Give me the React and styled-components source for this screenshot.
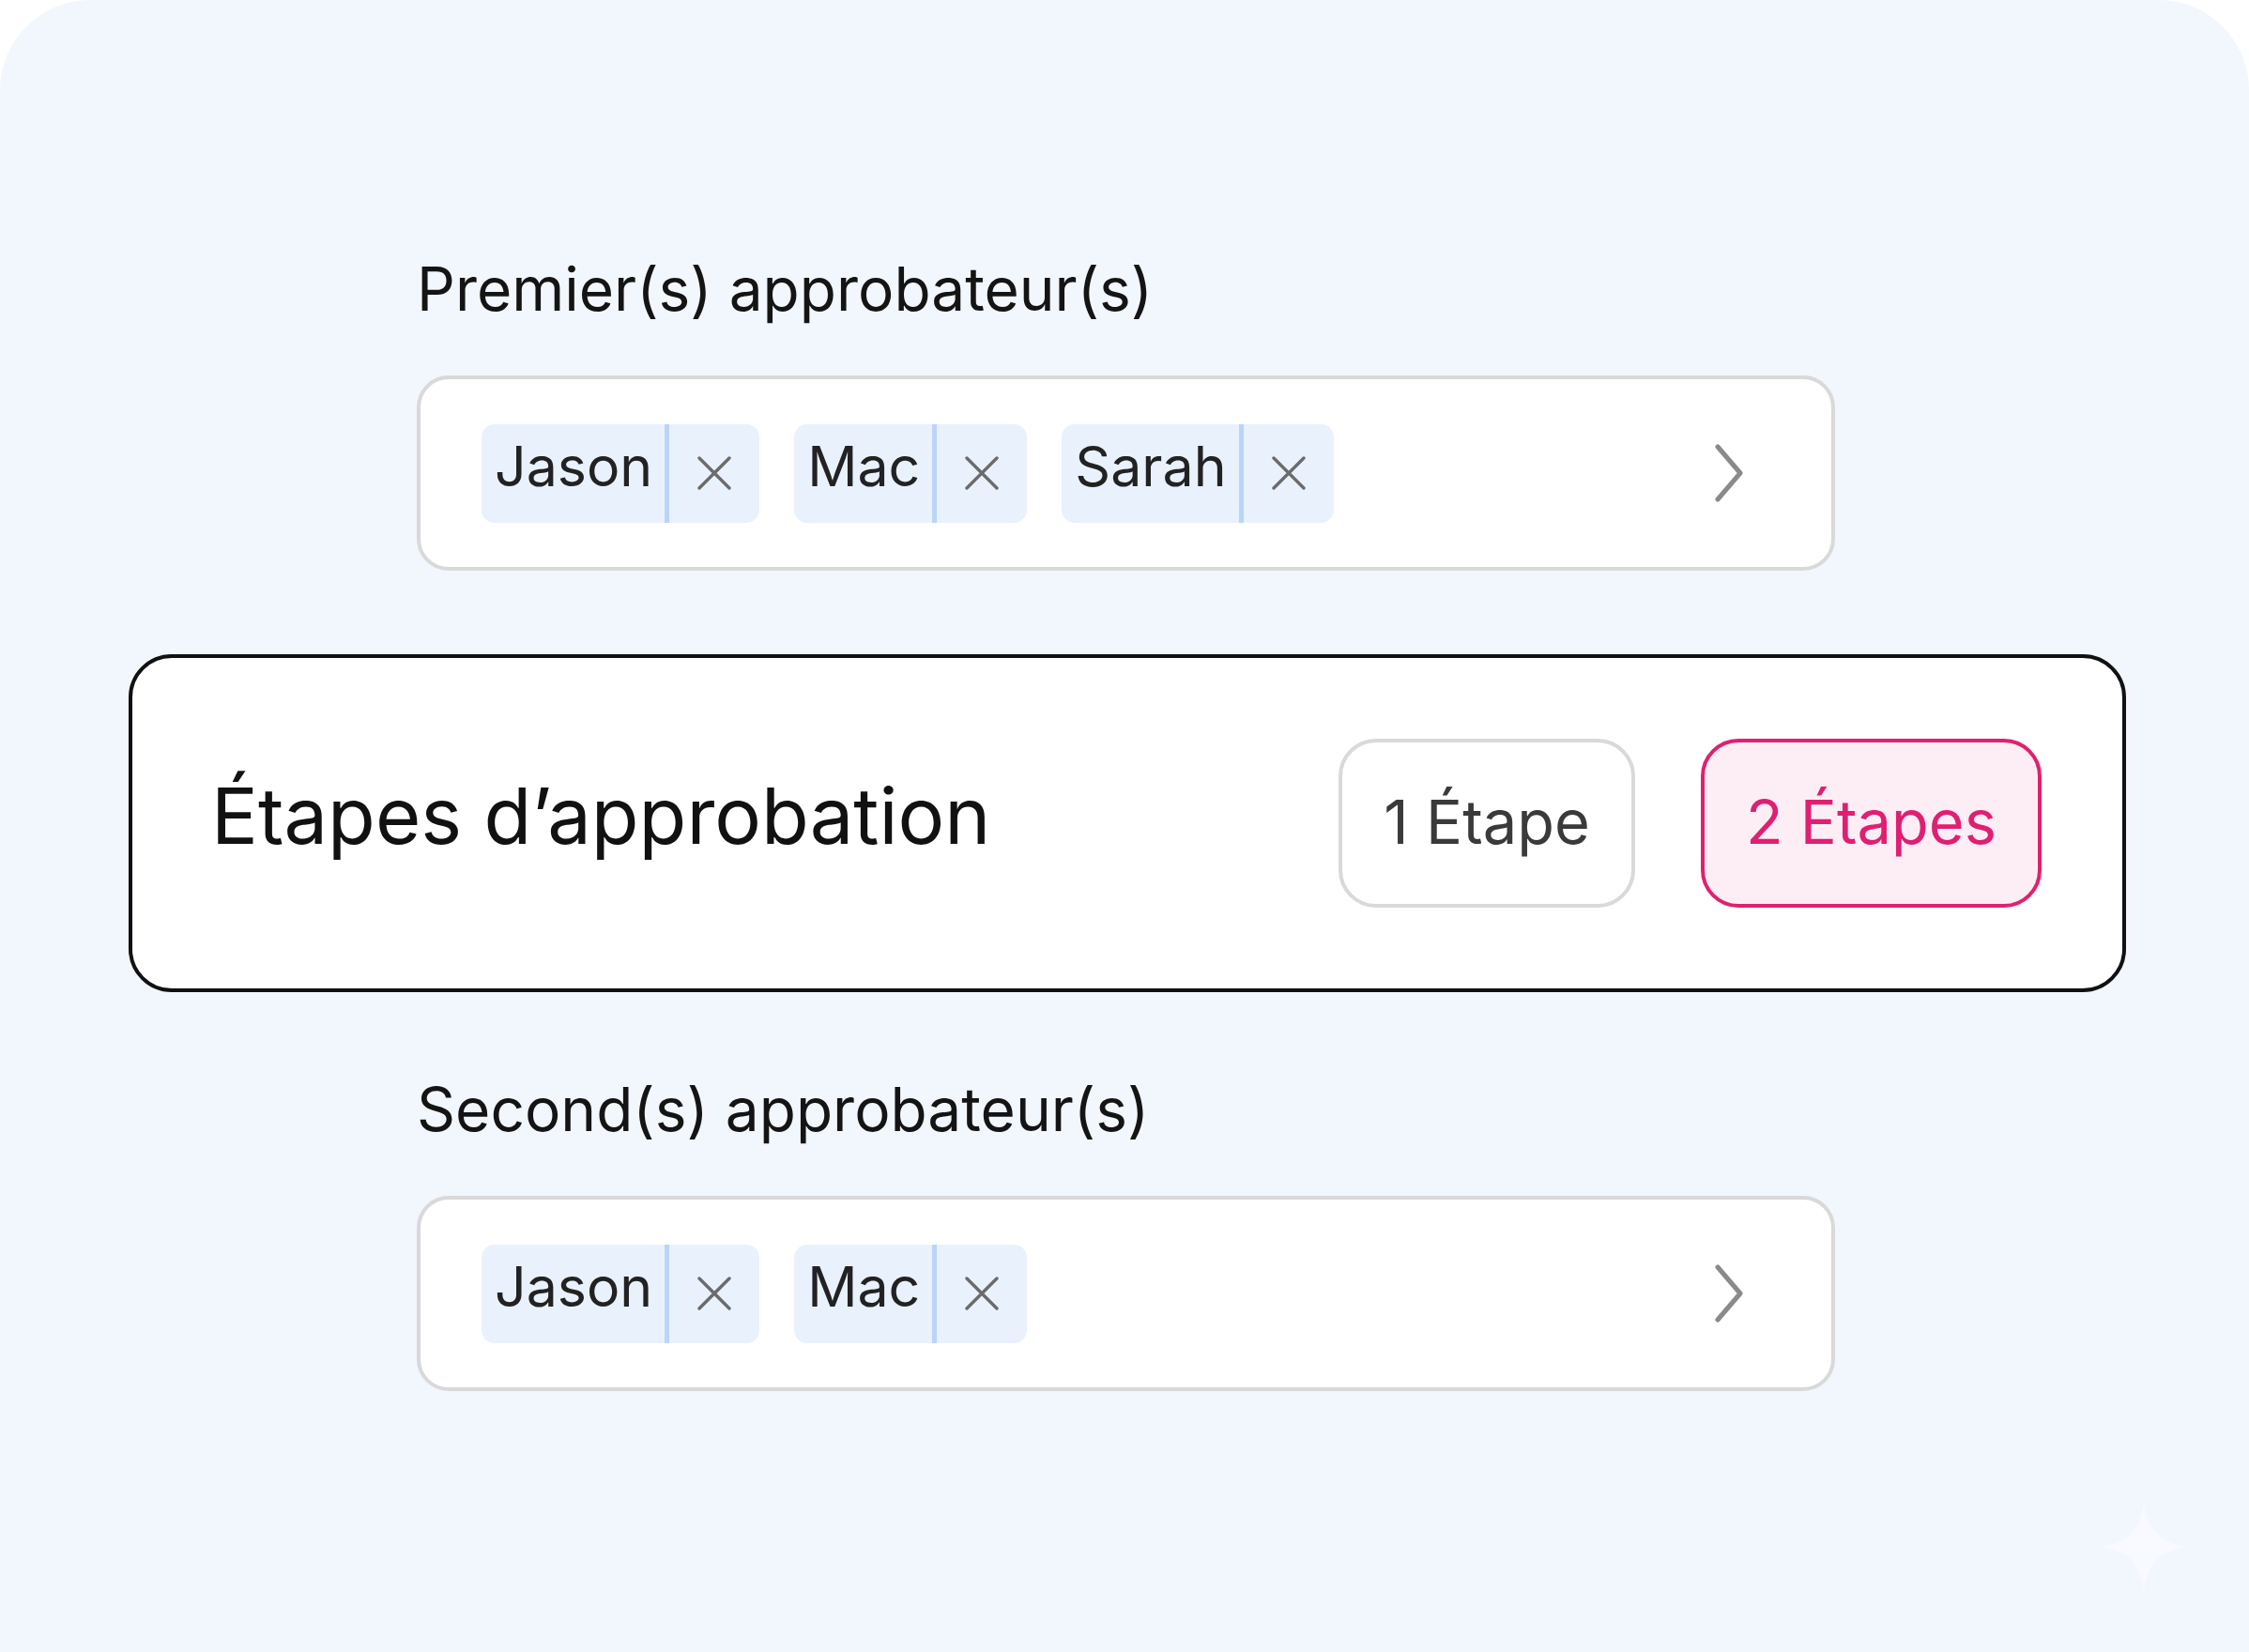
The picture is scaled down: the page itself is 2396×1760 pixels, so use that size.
import React from "react";
import styled, { createGlobalStyle } from "styled-components";

const GlobalStyle = createGlobalStyle`
  html, body {
    margin: 0;
    padding: 0;
    background: #ffffff;
  }
  body {
    font-family: Inter, Lato, "Liberation Sans", sans-serif;
    font-variant-ligatures: none;
  }
`;

const first = ["Jason", "Mac", "Sarah"];
const second = ["Jason", "Mac"];

const App = () => {
  return (
    <>
      <GlobalStyle />
      <Frame>
        <Section>
          <Label>Premier(s) approbateur(s)</Label>
          <Picker names={first} />
        </Section>
        <StepsCard>
          <StepsTitle>Étapes d’approbation</StepsTitle>
          <StepButtons>
            <StepButton>1 Étape</StepButton>
            <StepButton $active>2 Étapes</StepButton>
          </StepButtons>
        </StepsCard>
        <Section>
          <Label>Second(s) approbateur(s)</Label>
          <Picker names={second} />
        </Section>
        <Sparkle viewBox="0 0 96 96">
          <path d="M48 0 C51 30 66 45 96 48 C66 51 51 66 48 96 C45 66 30 51 0 48 C30 45 45 30 48 0 Z" />
        </Sparkle>
      </Frame>
    </>
  );
};

const Picker = ({ names }) => (
  <Field>
    <Chips>
      {names.map((n) => (
        <Chip key={n}>
          <ChipName>{n}</ChipName>
          <ChipRemove>
            <svg width="36" height="36" viewBox="0 0 36 36">
              <path
                d="M2 2 L34 34 M34 2 L2 34"
                stroke="#6b6b6b"
                strokeWidth="3.4"
                strokeLinecap="round"
                fill="none"
              />
            </svg>
          </ChipRemove>
        </Chip>
      ))}
    </Chips>
    <svg width="30" height="62" viewBox="0 0 30 62">
      <path
        d="M3 3 L27 31 L3 59"
        stroke="#8a8a8a"
        strokeWidth="5"
        strokeLinecap="round"
        strokeLinejoin="round"
        fill="none"
      />
    </svg>
  </Field>
);

export default App;

const Frame = styled.div`
  position: relative;
  width: 2396px;
  height: 1760px;
  box-sizing: border-box;
  background: #f2f6fd;
  border-radius: 96px 96px 0 0;
  padding-top: 276px;
  display: flex;
  flex-direction: column;
  align-items: center;
  overflow: hidden;
`;

const Section = styled.div`
  width: 1511px;
  margin-left: 3px;
  display: flex;
  flex-direction: column;
  gap: 61px;
`;

const Label = styled.div`
  font-size: 64px;
  line-height: 63px;
  color: #141414;
`;

const Field = styled.div`
  height: 208px;
  box-sizing: border-box;
  border: 4px solid #d9d9d9;
  border-radius: 34px;
  background: #ffffff;
  display: flex;
  align-items: center;
  justify-content: space-between;
  padding: 0 94px 0 65px;
`;

const Chips = styled.div`
  display: flex;
  gap: 37px;
`;

const Chip = styled.div`
  display: flex;
  height: 105px;
  border-radius: 14px;
  background: #e9f1fd;
  overflow: hidden;
`;

const ChipName = styled.span`
  display: flex;
  align-items: center;
  padding: 0 13px 16px 14px;
  font-size: 59px;
  color: #222222;
  border-right: 5px solid #b9d5f7;
`;

const ChipRemove = styled.span`
  width: 96px;
  display: flex;
  align-items: center;
  justify-content: center;
`;

const StepsCard = styled.div`
  width: 2128px;
  height: 360px;
  box-sizing: border-box;
  margin: 89px 0 93px 6px;
  border: 4px solid #111111;
  border-radius: 46px;
  background: #ffffff;
  display: flex;
  align-items: center;
  justify-content: space-between;
  padding: 0 86px 0 84px;
`;

const StepsTitle = styled.div`
  font-size: 83px;
  color: #111111;
  padding-bottom: 16px;
`;

const StepButtons = styled.div`
  display: flex;
  gap: 70px;
`;

const StepButton = styled.div`
  height: 180px;
  box-sizing: border-box;
  display: flex;
  align-items: center;
  padding: 0 44px 4px;
  border-radius: 40px;
  font-size: 65px;
  border: 4px solid ${(p) => (p.$active ? "#e0216f" : "#d9d9d9")};
  background: ${(p) => (p.$active ? "#fdeef5" : "#ffffff")};
  color: ${(p) => (p.$active ? "#df1f72" : "#3a3a3a")};
`;

const Sparkle = styled.svg`
  position: absolute;
  left: 2236px;
  top: 1600px;
  width: 96px;
  height: 96px;
  fill: #f8faff;
`;
